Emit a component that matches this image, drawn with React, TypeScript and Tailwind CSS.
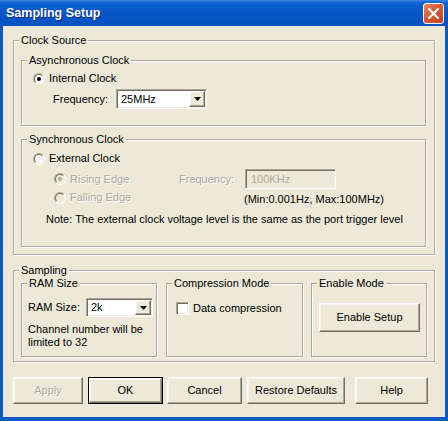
import React from "react";

const raised =
  "border border-t-white border-l-white border-r-[#716f64] border-b-[#716f64] shadow-[inset_-1px_-1px_0_#aca899,inset_1px_1px_0_#f5f4ee] bg-[#ece9d8]";
const sunken =
  "border border-t-[#aca899] border-l-[#aca899] border-r-white border-b-white shadow-[inset_1px_1px_0_#716f64,inset_-1px_-1px_0_#f1efe2]";
const dis = "text-[#aca899] [text-shadow:1px_1px_0_#ffffff]";

function Group({
  title,
  className,
  children,
}: {
  title: string;
  className: string;
  children?: React.ReactNode;
}) {
  return (
    <div
      className={`border border-[#aca899] shadow-[inset_1px_1px_0_#ffffff,1px_1px_0_#ffffff] flex flex-col shrink-0 ${className}`}
    >
      <div className="-mt-[7px] ml-[5px] px-[2px] h-[13px] w-fit bg-[#ece9d8] whitespace-nowrap">
        {title}
      </div>
      {children}
    </div>
  );
}

function Radio({ checked, disabled }: { checked?: boolean; disabled?: boolean }) {
  return (
    <span className="relative block w-[12px] h-[12px] shrink-0 rounded-full border border-t-[#aca899] border-l-[#aca899] border-r-white border-b-white">
      <span
        className={`absolute inset-0 rounded-full border border-t-[#716f64] border-l-[#716f64] border-r-[#f1efe2] border-b-[#f1efe2] ${
          disabled ? "bg-[#ece9d8]" : "bg-white"
        }`}
      />
      {checked && (
        <span
          className={`absolute left-[3px] top-[3px] w-[4px] h-[4px] rounded-full ${
            disabled ? "bg-[#aca899]" : "bg-black"
          }`}
        />
      )}
    </span>
  );
}

function Arrow() {
  return (
    <svg width="7" height="4" viewBox="0 0 7 4">
      <path d="M0 0h7L3.5 4z" fill="#000" />
    </svg>
  );
}

function Select({ value, className }: { value: string; className: string }) {
  return (
    <div className={`flex bg-white p-[1px] ${sunken} ${className}`}>
      <span className="flex-1 pl-[3px] self-center">{value}</span>
      <div className={`w-[16px] h-full flex items-center justify-center ${raised}`}>
        <Arrow />
      </div>
    </div>
  );
}

function Btn({
  children,
  className,
  disabled,
  def,
}: {
  children: React.ReactNode;
  className: string;
  disabled?: boolean;
  def?: boolean;
}) {
  const inner = (
    <div className={`w-full h-full flex items-center justify-center ${raised} ${disabled ? dis : ""}`}>
      {children}
    </div>
  );
  if (def) {
    return <div className={`border border-black shrink-0 ${className}`}>{inner}</div>;
  }
  return <div className={`shrink-0 ${className}`}>{inner}</div>;
}

export default function App() {
  return (
    <div className="w-[448px] h-[421px] flex flex-col bg-[#0c58c6] font-['Liberation_Sans',Arial,sans-serif] text-[11px] leading-[13px] text-black select-none overflow-hidden">
      {/* Title bar */}
      <div className="h-[26px] shrink-0 flex items-center justify-between pl-[6px] pr-[4px] bg-[linear-gradient(to_bottom,#3d86e4_0%,#1463d2_10%,#0a5acb_30%,#0656c6_60%,#0551bf_100%)]">
        <span className="text-white font-bold text-[12.5px] leading-[16px] [text-shadow:1px_1px_0_#0a2a80]">
          Sampling Setup
        </span>
        <div className="w-[21px] h-[21px] rounded-[3px] border border-white bg-[linear-gradient(135deg,#e98a66_0%,#d85a34_45%,#c4441f_100%)] flex items-center justify-center">
          <svg width="13" height="13" viewBox="0 0 13 13">
            <path d="M2 2L11 11M11 2L2 11" stroke="#fff" strokeWidth="2.2" strokeLinecap="round" />
          </svg>
        </div>
      </div>

      {/* Body */}
      <div className="flex-1 mx-[3px] mb-[4px] bg-[#ece9d8] flex flex-col px-[10px]">
        <Group title="Clock Source" className="mt-[14px] h-[215px]">
          <Group title="Asynchronous Clock" className="mt-[13px] ml-[7px] mr-[8px] h-[66px]">
            <div className="mt-[5px] ml-[11px] h-[13px] flex items-center gap-[4px]">
              <Radio checked />
              <span>Internal Clock</span>
            </div>
            <div className="mt-[4px] ml-[31px] h-[20px] flex items-center">
              <span className="w-[63px]">Frequency:</span>
              <Select value="25MHz" className="w-[91px] h-[20px]" />
            </div>
          </Group>

          <Group title="Synchronous Clock" className="mt-[13px] ml-[7px] mr-[8px] h-[108px]">
            <div className="mt-[6px] ml-[11px] h-[13px] flex items-center gap-[4px]">
              <Radio />
              <span>External Clock</span>
            </div>
            <div className="mt-[4px] flex">
              <div className="ml-[32px] w-[125px] flex flex-col">
                <div className="h-[20px] flex items-center gap-[4px]">
                  <Radio checked disabled />
                  <span className={dis}>Rising Edge</span>
                </div>
                <div className="mt-[2px] h-[13px] flex items-center gap-[4px]">
                  <Radio disabled />
                  <span className={dis}>Falling Edge</span>
                </div>
              </div>
              <div className="flex flex-col">
                <div className="h-[20px] flex items-center">
                  <span className={`w-[66px] ${dis}`}>Frequency:</span>
                  <div className={`w-[91px] h-[20px] flex items-center pl-[5px] text-[#aca899] ${sunken}`}>
                    100KHz
                  </div>
                </div>
                <div className="mt-[4px] h-[13px] pl-[65px] whitespace-nowrap">
                  (Min:0.001Hz, Max:100MHz)
                </div>
              </div>
            </div>
            <div className="mt-[7px] ml-[24px] h-[13px] whitespace-nowrap">
              Note: The external clock voltage level is the same as the port trigger level
            </div>
          </Group>
        </Group>

        <Group title="Sampling" className="mt-[15px] h-[92px]">
          <div className="mt-[6px] flex">
            <Group title="RAM Size" className="ml-[7px] w-[136px] h-[74px]">
              <div className="mt-[8px] ml-[6px] h-[19px] flex items-center">
                <span className="w-[58px]">RAM Size:</span>
                <Select value="2k" className="w-[67px] h-[19px]" />
              </div>
              <div className="mt-[6px] ml-[6px]">
                <div>Channel number will be</div>
                <div>limited to 32</div>
              </div>
            </Group>
            <Group title="Compression Mode" className="ml-[9px] w-[137px] h-[74px]">
              <div className="mt-[12px] ml-[9px] h-[13px] flex items-center gap-[4px]">
                <span className={`block w-[13px] h-[13px] bg-white shrink-0 ${sunken}`} />
                <span>Data compression</span>
              </div>
            </Group>
            <Group title="Enable Mode" className="ml-[8px] w-[116px] h-[74px]">
              <Btn className="mt-[13px] ml-[7px] w-[101px] h-[29px]">Enable Setup</Btn>
            </Group>
          </div>
        </Group>

        <div className="mt-[15px] h-[27px] flex">
          <Btn className="w-[70px] h-[27px]" disabled>
            Apply
          </Btn>
          <Btn className="ml-[5px] w-[75px] h-[27px]" def>
            OK
          </Btn>
          <Btn className="ml-[4px] w-[75px] h-[27px]">Cancel</Btn>
          <Btn className="ml-[5px] w-[98px] h-[27px]">Restore Defaults</Btn>
          <Btn className="ml-[10px] w-[73px] h-[27px]">Help</Btn>
        </div>
      </div>
    </div>
  );
}
